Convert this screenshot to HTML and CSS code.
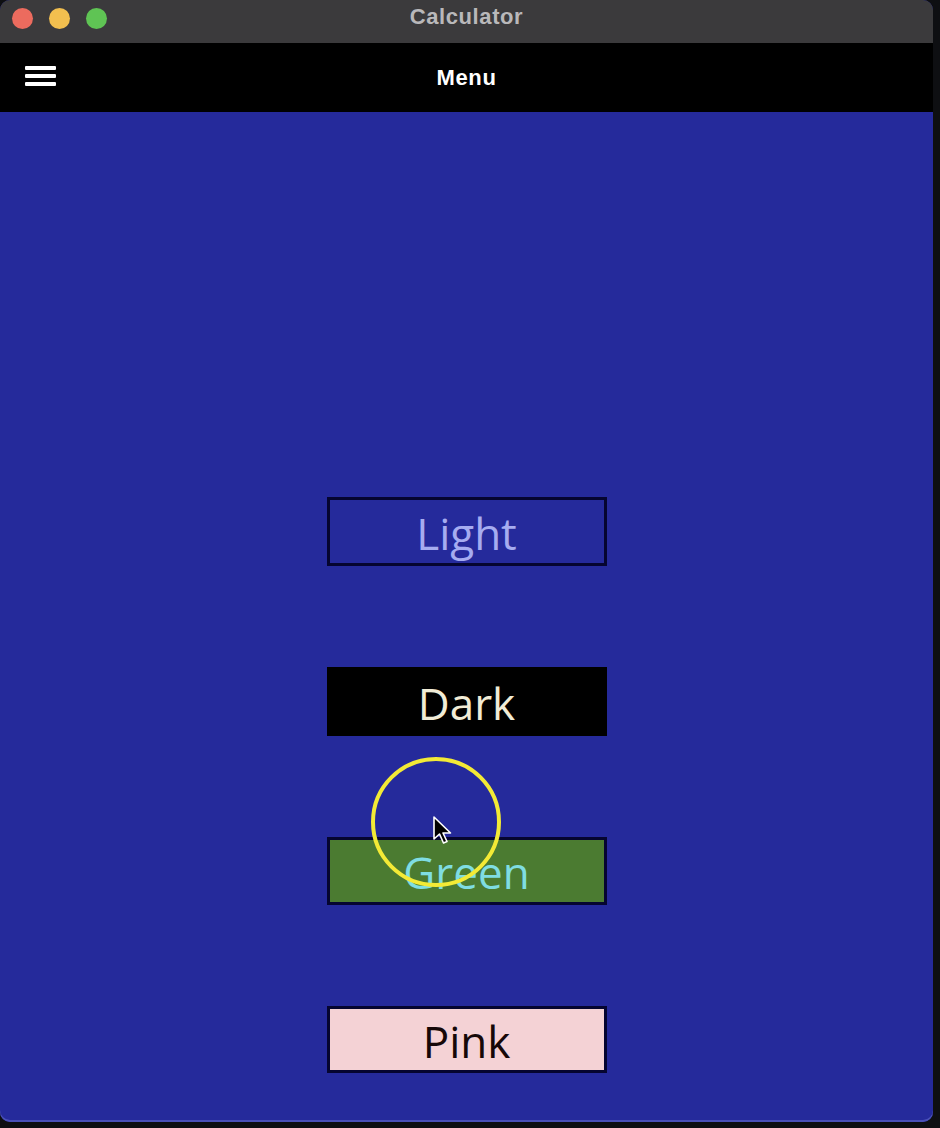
FILE: index.html
```html
<!DOCTYPE html>
<html>
<head>
<meta charset="utf-8">
<link rel="stylesheet" href="styles.css">
</head>
<body>
<div class="window">
  <div class="titlebar">
    <div class="lights">
      <span class="light red"></span>
      <span class="light yellow"></span>
      <span class="light green"></span>
    </div>
    <div class="title">Calculator</div>
  </div>
  <div class="toolbar">
    <svg class="hamburger" width="32" height="22" viewBox="0 0 32 22">
      <rect x="0" y="1" width="31" height="4" rx="1" fill="#fff"/>
      <rect x="0" y="9" width="31" height="4" rx="1" fill="#fff"/>
      <rect x="0" y="17" width="31" height="4" rx="1" fill="#fff"/>
    </svg>
    <div class="menu-title">Menu</div>
  </div>
  <div class="content">
    <div class="btn btn-light">Light</div>
    <div class="btn btn-dark">Dark</div>
    <div class="btn btn-green">Green</div>
    <div class="btn btn-pink">Pink</div>
    <div class="click-ring"></div>
    <svg class="cursor" width="22" height="32" viewBox="0 0 22 32">
      <path d="M2 2 L2 24 L7.5 19 L11.5 28 L15 26.5 L11 18 L18.5 18 Z" fill="#000" stroke="#fff" stroke-width="1.6" stroke-linejoin="round"/>
    </svg>
  </div>
</div>
</body>
</html>
```

FILE: styles.css
```css
html, body {
  margin: 0;
  padding: 0;
  background: #0e0f12;
  width: 940px;
  height: 1128px;
  overflow: hidden;
}

.window {
  width: 933px;
  height: 1122px;
  border-radius: 10px;
  overflow: hidden;
  display: flex;
  flex-direction: column;
  background: #252a9b;
  box-shadow: inset 0 -2px 0 #4a50b8;
}

.titlebar {
  height: 43px;
  box-sizing: border-box;
  padding-bottom: 7px;
  background: #3b3a3c;
  display: flex;
  align-items: center;
  position: relative;
  flex-shrink: 0;
}

.lights {
  display: flex;
  gap: 16px;
  padding-left: 12px;
}

.light {
  width: 21px;
  height: 21px;
  border-radius: 50%;
  display: block;
}
.light.red { background: #ec6b5e; }
.light.yellow { background: #f2bf4f; }
.light.green { background: #5fc454; }

.title {
  position: absolute;
  left: 0;
  right: 0;
  top: 4px;
  text-align: center;
  font-family: "Liberation Sans", Arial, sans-serif;
  font-weight: bold;
  font-size: 22px;
  letter-spacing: 0.6px;
  color: #b9b8ba;
}

.toolbar {
  height: 69px;
  background: #000;
  display: flex;
  align-items: center;
  position: relative;
  flex-shrink: 0;
}

.hamburger {
  margin-left: 25px;
  margin-top: -4px;
}

.menu-title {
  position: absolute;
  left: 0;
  right: 0;
  text-align: center;
  font-family: "Liberation Sans", Arial, sans-serif;
  font-weight: bold;
  font-size: 22px;
  letter-spacing: 0.6px;
  color: #fff;
  top: 22px;
}

.content {
  flex: 1;
  position: relative;
  display: flex;
  flex-direction: column;
  align-items: center;
  padding-top: 385px;
  gap: 101px;
}

.btn {
  box-sizing: border-box;
  width: 280px;
  height: 69px;
  border: 3px solid #050530;
  display: flex;
  align-items: center;
  justify-content: center;
  font-family: "Open Sans", "Noto Sans", sans-serif;
  font-size: 44px;
  line-height: 1;
  padding-top: 2px;
}

.btn-light {
  background: #252a9b;
  color: #a6acf0;
}
.btn-dark {
  background: #000;
  border-color: #000;
  color: #f1ecd6;
}
.btn-green {
  background: #4b7b31;
  color: #7fdde2;
  height: 68px;
}
.btn-pink {
  background: #f4d2d5;
  color: #160808;
  height: 67px;
}

.click-ring {
  position: absolute;
  left: 371px;
  top: 645px;
  width: 130px;
  height: 130px;
  border: 4px solid #f3ea36;
  border-radius: 50%;
  box-sizing: border-box;
}

.cursor {
  position: absolute;
  left: 432px;
  top: 703px;
}
```
